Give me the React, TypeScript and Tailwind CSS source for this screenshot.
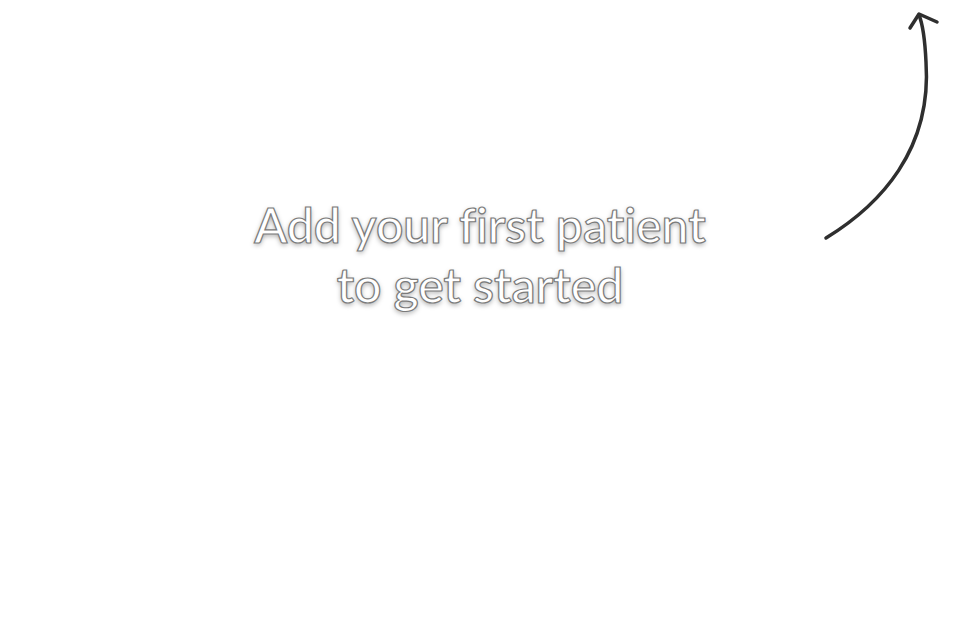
import React from 'react';

// Empty state for the patient list, with a hand-drawn arrow pointing at the add button
const App: React.FC = () => {
  return (
    <div className="relative h-[640px] w-[960px] overflow-hidden bg-white font-['Lato',sans-serif]">
      {/* Arrow to top-right corner */}
      <svg
        className="absolute left-0 top-0"
        width="960"
        height="260"
        viewBox="0 0 960 260"
        fill="none"
      >
        <path
          d="M826 238 C 880 205, 932 150, 926 62 C 925 40, 923 25, 919 15"
          stroke="#2f2f2f"
          strokeWidth="3.5"
          strokeLinecap="round"
        />
        <path
          d="M910 28 L919 14 L937 22"
          stroke="#2f2f2f"
          strokeWidth="3.5"
          strokeLinecap="round"
          strokeLinejoin="round"
        />
      </svg>

      <div className="flex flex-col items-center pt-[195px]">
        <h1 className="text-center text-[48px] font-semibold leading-[60px] text-white [font-variant-ligatures:none] [-webkit-text-stroke:1.2px_#7a7a7a] [text-shadow:0_2px_5px_rgba(0,0,0,0.35)]">
          Add your first patient
          <br />
          to get started
        </h1>
      </div>
    </div>
  );
};

export default App;
